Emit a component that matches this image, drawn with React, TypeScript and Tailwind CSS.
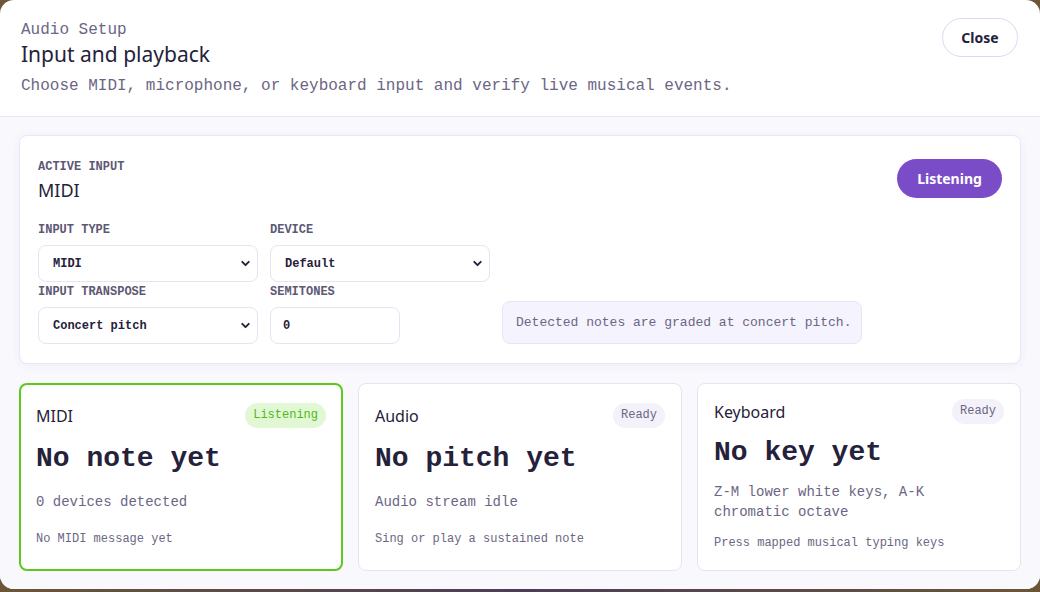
import React from 'react';
import { ChevronDown } from 'lucide-react';

const mono = "font-['Liberation_Mono',monospace]";
const sans = "font-['Noto_Sans',sans-serif]";

type SourceCardProps = {
  title: string;
  status: string;
  active?: boolean;
  reading: string;
  detail: string;
  hint: string;
  spacing: { heading: string; detail: string; hint: string };
};

const SourceCard = ({ title, status, active, reading, detail, hint, spacing }: SourceCardProps) => (
  <div
    className={`flex flex-col justify-center rounded-lg bg-white pb-1 ${
      active ? 'border-2 border-[#5cc91c] px-[15px]' : 'border border-[#e7e3f3] px-4'
    }`}
  >
    <div className="flex items-center justify-between">
      <span className={`${sans} text-base text-[#25213a]`}>{title}</span>
      <span
        className={`${mono} rounded-full px-2 py-1 text-xs leading-[17px] ${
          active ? 'bg-[#e2f7d3] text-[#4fb91c]' : 'bg-[#f3f1fa] text-[#6c6684]'
        }`}
      >
        {status}
      </span>
    </div>
    <div className={`${mono} ${spacing.heading} text-[28px] font-bold leading-[34px] text-[#25213a]`}>
      {reading}
    </div>
    <div className={`${mono} ${spacing.detail} text-sm leading-5 text-[#6c6684]`}>{detail}</div>
    <div className={`${mono} ${spacing.hint} text-xs leading-4 text-[#6c6684]`}>{hint}</div>
  </div>
);

const Field = ({ label, children }: { label: string; children: React.ReactNode }) => (
  <label className="flex flex-col gap-[7px]">
    <span className={`${mono} text-xs font-bold leading-4 text-[#5d5874]`}>{label}</span>
    {children}
  </label>
);

const SelectBox = ({ value, options }: { value: string; options: string[] }) => (
  <div className="relative">
    <select
      defaultValue={value}
      className={`${mono} h-[37px] w-full appearance-none rounded-lg border border-[#e7e3f3] bg-white pl-3.5 text-xs font-bold text-[#25213a] outline-none`}
    >
      {options.map((o) => (
        <option key={o}>{o}</option>
      ))}
    </select>
    <ChevronDown
      size={13}
      strokeWidth={3.5}
      className="pointer-events-none absolute right-[6px] top-[12px] text-[#25213a]"
    />
  </div>
);

export default function App() {
  return (
    <div className="h-[592px] w-[1040px] bg-gradient-to-r from-[#6b5636] via-[#4b3d55] to-[#6b5636]">
      <div className="flex h-[589px] flex-col overflow-hidden rounded-[14px] bg-white">
        <header className="flex items-start justify-between border-b border-[#e9e6f6] pb-[18px] pl-[21px] pr-[22px] pt-[18px]">
          <div>
            <div className={`${mono} text-base leading-6 text-[#6c6684]`}>Audio Setup</div>
            <h1 className={`${sans} text-[21px] leading-6 text-[#25213a]`}>Input and playback</h1>
            <p className={`${mono} mt-2 text-base leading-6 text-[#6c6684]`}>
              Choose MIDI, microphone, or keyboard input and verify live musical events.
            </p>
          </div>
          <button
            className={`${sans} h-[39px] w-[76px] rounded-full border border-[#dcd8ee] text-sm font-bold text-[#25213a]`}
          >
            Close
          </button>
        </header>

        <main className="flex flex-1 flex-col gap-[19px] bg-[#f9f8fd] px-[19px] pb-[18px] pt-[18px]">
          <section className="rounded-lg border border-[#e9e6f5] bg-white px-[18px] pb-[19px] pt-[23px] shadow-[0_2px_10px_rgba(90,70,160,0.06)]">
            <div className="flex items-start justify-between">
              <div>
                <div className={`${mono} text-xs font-bold leading-4 text-[#5d5874]`}>ACTIVE INPUT</div>
                <div className={`${sans} mt-[3px] text-lg leading-6 text-[#25213a]`}>MIDI</div>
              </div>
              <button
                className={`${sans} h-[39px] w-[105px] rounded-full bg-[#7a4cc8] text-sm font-bold text-white`}
              >
                Listening
              </button>
            </div>

            <div className="mt-5 grid grid-cols-[220px_220px_360px] items-end gap-x-3 gap-y-0.5">
              <Field label="INPUT TYPE">
                <SelectBox value="MIDI" options={['MIDI', 'Audio', 'Keyboard']} />
              </Field>
              <Field label="DEVICE">
                <SelectBox value="Default" options={['Default']} />
              </Field>
              <div />
              <Field label="INPUT TRANSPOSE">
                <SelectBox value="Concert pitch" options={['Concert pitch', 'B♭', 'E♭', 'F']} />
              </Field>
              <Field label="SEMITONES">
                <input
                  type="number"
                  defaultValue={0}
                  className={`${mono} h-[37px] w-[130px] rounded-lg border border-[#e7e3f3] bg-white pl-3 text-xs font-bold text-[#25213a] outline-none`}
                />
              </Field>
              <div
                className={`${mono} flex h-[43px] items-center rounded-lg border border-[#e8e4f6] bg-[#f5f3fd] pl-[13px] text-[13px] text-[#6c6684]`}
              >
                Detected notes are graded at concert pitch.
              </div>
            </div>
          </section>

          <div className="grid flex-1 grid-cols-3 gap-[15px]">
            <SourceCard
              title="MIDI"
              status="Listening"
              active
              reading="No note yet"
              detail="0 devices detected"
              hint="No MIDI message yet"
              spacing={{ heading: 'mt-3.5', detail: 'mt-4', hint: 'mt-[19px]' }}
            />
            <SourceCard
              title="Audio"
              status="Ready"
              reading="No pitch yet"
              detail="Audio stream idle"
              hint="Sing or play a sustained note"
              spacing={{ heading: 'mt-3.5', detail: 'mt-4', hint: 'mt-[19px]' }}
            />
            <SourceCard
              title="Keyboard"
              status="Ready"
              reading="No key yet"
              detail="Z-M lower white keys, A-K chromatic octave"
              hint="Press mapped musical typing keys"
              spacing={{ heading: 'mt-3', detail: 'mt-3', hint: 'mt-[13px]' }}
            />
          </div>
        </main>
      </div>
    </div>
  );
}
